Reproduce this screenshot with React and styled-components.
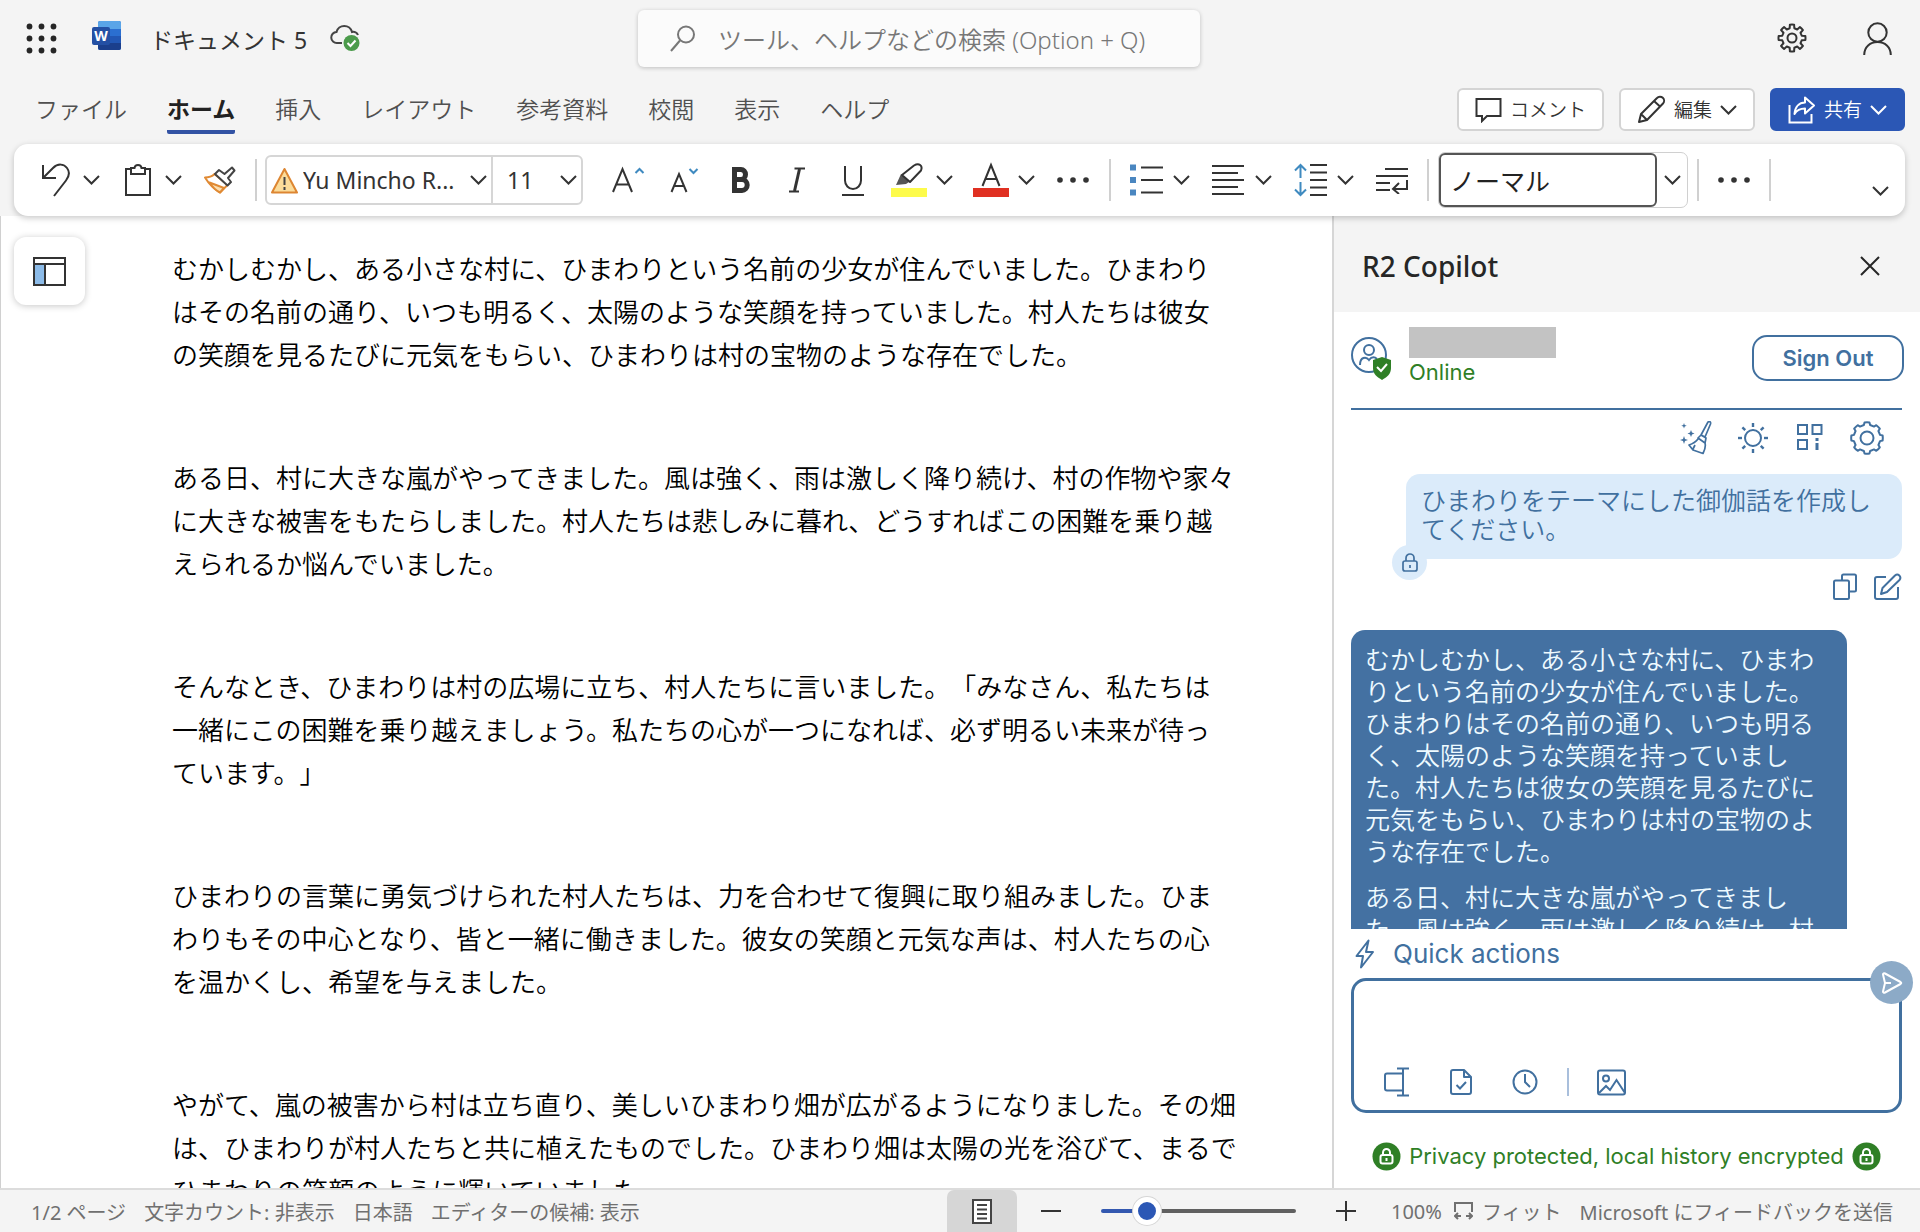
import React, { useState } from 'react';
import styled, { createGlobalStyle } from 'styled-components';

const uiFont = `"Noto Sans", "Noto Sans CJK JP", sans-serif`;
const panelFont = `Inter, "Noto Sans CJK JP", sans-serif`;

const blue = '#41709f';
const green = '#2f7f26';

const GlobalStyle = createGlobalStyle`
  * {
    box-sizing: border-box;
  }

  body {
    margin: 0;
    background: #f4f4f4;
    color: #333;
    font-family: ${uiFont};
    text-spacing-trim: space-all;
  }

  button, input, select, textarea {
    margin: 0;
    padding: 0;
    border: 0;
    background: none;
    color: inherit;
    font: inherit;
  }

  svg {
    display: block;
    flex: none;
  }

  p, h1 {
    margin: 0;
  }
`;

const Window = styled.div`
  display: flex;
  flex-direction: column;
  height: 100vh;
  overflow: hidden;
`;

/* ---------- header ---------- */

const TitleBar = styled.header`
  display: grid;
  grid-template-columns: 638fr 562fr 720fr;
  align-items: center;
  height: 76px;
`;

const TitleLeft = styled.div`
  display: flex;
  align-items: center;
  padding-left: 26px;
`;

const DocName = styled.h1`
  margin: 2px 23px 0 28px;
  font-size: 23px;
  font-weight: 400;
  white-space: nowrap;
`;

const Launcher = styled.button`
  margin-right: 35px;
`;

const SearchBox = styled.label`
  display: flex;
  align-items: center;
  gap: 22px;
  height: 57px;
  padding: 2px 32px 0;
  border-radius: 6px;
  background: #fbfbfb;
  box-shadow: 0 1px 4px rgba(0, 0, 0, 0.22);
  color: #777;
`;

const SearchInput = styled.input.attrs({ type: 'search' })`
  flex: 1;
  min-width: 0;
  outline: 0;
  appearance: none;
  font-size: 24px;
  font-weight: 350;

  &::placeholder {
    color: #777;
    opacity: 1;
  }
`;

const TitleRight = styled.div`
  display: flex;
  justify-content: flex-end;
  align-items: center;
  gap: 56px;
  padding-right: 28px;
`;

const TabBar = styled.div`
  display: flex;
  justify-content: space-between;
  height: 68px;
  padding: 12px 15px 0 35px;
`;

const Tabs = styled.nav`
  display: flex;
  gap: 40px;
  height: 46px;
`;

const Tab = styled.a`
  border-bottom: 4px solid ${p => (p.$active ? '#3353a4' : 'transparent')};
  border-radius: 2px;
  color: ${p => (p.$active ? '#222' : '#505050')};
  font-size: 23px;
  font-weight: ${p => (p.$active ? 700 : 350)};
  line-height: 42px;
  text-decoration: none;
  white-space: nowrap;
`;

const TabActions = styled.div`
  display: flex;
  gap: 15px;
`;

const ActionButton = styled.button`
  display: flex;
  align-items: center;
  gap: 8px;
  height: 43px;
  padding: 0 16px;
  border: 2px solid ${p => (p.$primary ? '#2b57b5' : '#d4d4d4')};
  border-radius: 6px;
  background: ${p => (p.$primary ? '#2b57b5' : '#fff')};
  color: ${p => (p.$primary ? '#fff' : '#333')};
  font-size: 19px;
  font-weight: 350;
  line-height: 30px;
  white-space: nowrap;
`;

/* ---------- ribbon ---------- */

const Ribbon = styled.div`
  position: relative;
  z-index: 1;
  display: flex;
  align-items: center;
  height: 72px;
  margin: 0 15px 0 14px;
  padding: 0 16px 0 7px;
  border-radius: 14px;
  background: #fff;
  box-shadow: 0 2px 6px rgba(0, 0, 0, 0.22);
`;

const Group = styled.div`
  display: flex;
  align-items: center;
  gap: 20px;
  padding: 0 17px;
`;

const FontGroup = styled(Group)`
  padding: 0 18px 0 8px;
`;

const StyleGroup = styled(Group)`
  padding: 0 9px;
`;

const Divider = styled.div`
  width: 2px;
  height: 42px;
  background: #d0d0d0;
`;

const ToolButton = styled.button`
  display: flex;
  justify-content: center;
  align-items: center;
  width: 36px;
  height: 42px;
`;

const SplitButton = styled.button`
  display: grid;
  grid-template-columns: 36px 17px;
  gap: 9px;
  align-items: center;
  justify-items: center;
  height: 42px;
`;

const CollapseButton = styled.button`
  align-self: flex-end;
  margin-left: auto;
  padding-bottom: 20px;
`;

const FontBox = styled.div`
  display: flex;
  width: 318px;
  height: 50px;
  margin-right: 8px;
  border: 2px solid #d6d6d6;
  border-radius: 6px;
`;

const FontField = styled.label`
  display: flex;
  flex: ${p => (p.$narrow ? '0 0 90px' : 1)};
  align-items: center;
  gap: 5px;
  padding: 0 4px 0 ${p => (p.$narrow ? 14 : 4)}px;
  border-left: ${p => (p.$narrow ? '2px solid #d6d6d6' : 0)};

  select {
    flex: 1;
    min-width: 0;
    appearance: none;
    outline: 0;
    font-size: 23px;
  }
`;

const StyleBox = styled.div`
  display: flex;
  width: 250px;
  height: 56px;
  border: 1px solid #d0d0d0;
  border-radius: 7px;

  input {
    flex: 1;
    min-width: 0;
    padding: 0 9px;
    border: 2px solid #555;
    border-radius: 6px;
    outline: 0;
    color: #222;
    font-size: 25px;
  }

  button {
    display: grid;
    place-items: center;
    width: 30px;
  }
`;

/* ---------- document ---------- */

const Workspace = styled.main`
  display: flex;
  flex: 1;
  min-height: 0;
`;

const DocumentArea = styled.section`
  display: flex;
  flex: 1;
  align-items: flex-start;
  min-width: 0;
  padding-left: 13px;
  overflow: hidden;
  border-left: 1px solid #d0d0d0;
  background: #fff;
`;

const NavButton = styled.button`
  display: grid;
  flex: none;
  place-items: center;
  width: 71px;
  height: 68px;
  margin-top: 21px;
  border-radius: 12px;
  background: #fff;
  box-shadow: 0 1px 7px rgba(0, 0, 0, 0.22);
`;

const Page = styled.article`
  flex: 1;
  padding: 32px 0 0 87px;
  color: #000;
  font-size: 26px;
  font-weight: 350;
  line-height: 43px;
  white-space: nowrap;

  p {
    margin-bottom: 80px;
  }
`;

/* ---------- copilot ---------- */

const Panel = styled.aside`
  display: flex;
  flex: 0 0 588px;
  flex-direction: column;
  border-left: 2px solid #d6d6d6;
  background: #fff;
  color: ${blue};
  font-family: ${panelFont};
`;

const PanelHeader = styled.div`
  display: flex;
  justify-content: space-between;
  align-items: center;
  height: 96px;
  padding: 3px 40px 0 28px;
  background: #f4f4f4;
  color: #262626;
  font-family: ${uiFont};
  font-size: 28px;
  font-weight: 500;
`;

const PanelBody = styled.div`
  display: flex;
  flex: 1;
  flex-direction: column;
  min-height: 0;
  padding: 0 18px 0 17px;
`;

const Account = styled.div`
  display: flex;
  align-items: center;
  height: 98px;
  padding-bottom: 4px;
  border-bottom: 2px solid ${blue};
`;

const AccountText = styled.div`
  flex: 1;
  margin-left: 16px;
  padding-bottom: 4px;
  color: ${green};
  font-size: 22px;
  line-height: 28px;
`;

const HiddenName = styled.div`
  width: 147px;
  height: 31px;
  background: #c3c3c3;
`;

const SignOut = styled.button`
  width: 152px;
  height: 46px;
  margin-right: -2px;
  border: 2px solid ${blue};
  border-radius: 15px;
  font-size: 22px;
  font-weight: 600;
`;

const PanelTools = styled.div`
  display: flex;
  flex: none;
  justify-content: flex-end;
  align-items: center;
  gap: 23px;
  height: 55px;
  padding-right: 18px;

  button {
    display: grid;
    place-items: center;
    width: 34px;
    height: 36px;
  }
`;

const Chat = styled.div`
  display: flex;
  flex: 1;
  flex-direction: column;
  min-height: 0;
  padding-top: 9px;
  overflow: hidden;
`;

const UserBubble = styled.div`
  position: relative;
  flex: none;
  align-self: flex-end;
  width: 90%;
  padding: 13px 15px 14px;
  border-radius: 14px;
  background: #dbebfa;
  font-size: 25px;
  font-weight: 350;
  line-height: 29px;
`;

const LockBadge = styled.span`
  position: absolute;
  bottom: -21px;
  left: -14px;
  display: grid;
  place-items: center;
  width: 35px;
  height: 35px;
  border-radius: 50%;
  background: #dbebfa;
`;

const BubbleActions = styled.div`
  display: flex;
  justify-content: flex-end;
  gap: 17px;
  margin: 14px 0 29px;
`;

const ReplyBubble = styled.div`
  flex: none;
  width: 90%;
  padding: 14px;
  border-radius: 14px;
  background: #4471a2;
  color: #eefaff;
  font-size: 25px;
  font-weight: 350;
  line-height: 32px;

  p + p {
    margin-top: 14px;
  }
`;

const QuickActions = styled.button`
  display: flex;
  align-items: center;
  gap: 18px;
  height: 49px;
  padding-left: 4px;
  font-size: 26px;
`;

const Composer = styled.div`
  position: relative;
  display: flex;
  flex: none;
  flex-direction: column;
  height: 135px;
  border: 3px solid ${blue};
  border-radius: 15px;

  textarea {
    flex: 1;
    padding: 12px 40px 0 16px;
    outline: 0;
    resize: none;
    font-size: 22px;
  }
`;

const SendButton = styled.button`
  position: absolute;
  top: -20px;
  right: -14px;
  display: grid;
  place-items: center;
  width: 43px;
  height: 43px;
  border-radius: 50%;
  background: #8caac7;
  color: #fff;
`;

const ComposerTools = styled.div`
  display: flex;
  align-items: center;
  gap: 27px;
  padding: 0 28px 13px;
`;

const ComposerGroup = styled.div`
  display: flex;
  gap: 34px;

  button {
    display: grid;
    place-items: center;
    width: 30px;
    height: 30px;
  }
`;

const ToolDivider = styled.div`
  width: 2px;
  height: 28px;
  background: #a9bfdc;
`;

const Privacy = styled.div`
  display: flex;
  flex: none;
  justify-content: center;
  align-items: center;
  gap: 8px;
  height: 75px;
  padding-top: 11px;
  color: ${green};
  font-size: 22px;
  white-space: nowrap;
`;

/* ---------- status bar ---------- */

const StatusBar = styled.footer`
  display: flex;
  justify-content: space-between;
  height: 44px;
  padding: 0 27px 0 31px;
  border-top: 2px solid #dcdcdc;
  color: #707070;
  font-size: 20px;
  white-space: nowrap;
`;

const StatusGroup = styled.div`
  display: flex;
  align-items: center;
  gap: ${p => p.$gap}px;
`;

const StatusButton = styled.button`
  display: flex;
  align-items: center;
  gap: 9px;
`;

const ViewButton = styled.button`
  display: grid;
  place-items: center;
  width: 70px;
  height: 42px;
  border-radius: 7px 7px 0 0;
  background: #d6d6d6;
  color: #444;
`;

const ZoomGroup = styled(StatusGroup)`
  margin: 0 17px 0 6px;
  color: #333;
`;

const ZoomSlider = styled.input.attrs({ type: 'range' })`
  width: 195px;
  height: 28px;
  appearance: none;

  &::-webkit-slider-runnable-track {
    height: 4px;
    border-radius: 2px;
    background: linear-gradient(to right, #3358b0 23%, #606060 23%);
  }

  &::-webkit-slider-thumb {
    width: 28px;
    height: 28px;
    margin-top: -12px;
    border: 5px solid #fff;
    border-radius: 50%;
    appearance: none;
    background: #2b57b5;
    box-shadow: 0 0 0 1px #d6d6d6;
  }
`;

/* ---------- icons ---------- */

const Icon = ({ w, h, sw = 2, children }) => (
  <svg
    width={w}
    height={h}
    viewBox={`0 0 ${w} ${h}`}
    fill="none"
    stroke="currentColor"
    strokeWidth={sw}
    aria-hidden="true"
  >
    {children}
  </svg>
);

// outline of a cog centred on (c, c)
function cog(c, outer, inner, teeth) {
  const step = (Math.PI * 2) / teeth;
  const at = (r, a) => `${(c + r * Math.sin(a)).toFixed(2)} ${(c - r * Math.cos(a)).toFixed(2)}`;
  let d = '';

  for (let i = 0; i < teeth; i++) {
    const a = i * step;
    d += `${i ? 'L' : 'M'}${at(inner, a - step * 0.3)} L${at(outer, a - step * 0.2)} `;
    d += `A${outer} ${outer} 0 0 1 ${at(outer, a + step * 0.2)} L${at(inner, a + step * 0.3)} `;
  }

  return d + 'Z';
}

const Chevron = () => (
  <Icon w={17} h={10}><path d="M1 1l7.500 7.500L16 1" /></Icon>
);

const WaffleIcon = () => (
  <Icon w={31} h={31}>
    {[4, 16, 28].map(y => [4, 16, 28].map(x => (
      <circle key={x + '-' + y} cx={x - 0.5} cy={y - 0.5} r="2.900" fill="#262626" stroke="none" />
    )))}
  </Icon>
);

const WordIcon = () => (
  <svg width="30" height="35" viewBox="0 0 30 35" aria-hidden="true">
    <rect x="6" y="0" width="23" height="29" rx="2" fill="#2b6fd0" />
    <path d="M8 0h19a2 2 0 0 1 2 2v6H6V2a2 2 0 0 1 2-2z" fill="#5aa5e8" />
    <path d="M6 15h23v7H6z" fill="#2257b4" />
    <path d="M6 22h23v5a2 2 0 0 1-2 2H8a2 2 0 0 1-2-2z" fill="#1b3f8c" />
    <rect x="0" y="6" width="18" height="18" rx="2" fill="#2450a4" />
    <text x="9" y="20" fill="#fff" fontSize="14" fontWeight="700" textAnchor="middle" fontFamily="Noto Sans">W</text>
  </svg>
);

const CloudIcon = () => (
  <Icon w={31} h={29}>
    <path d="M12 18H7a5.500 5.500 0 0 1-.5-11A8 8 0 0 1 22 7a5 5 0 0 1 6 3" stroke="#444" transform="translate(0 1)" />
    <circle cx="21.500" cy="19" r="8" fill="#4b9b4b" stroke="none" />
    <path d="M17.500 19l3 3 5-5.500" stroke="#fff" />
  </Icon>
);

const SearchIcon = () => (
  <Icon w={26} h={28}>
    <circle cx="16" cy="9.500" r="8" />
    <path d="M10 15.500L1 26" />
  </Icon>
);

const SettingsIcon = () => (
  <Icon w={30} h={30}>
    <path d={cog(15, 13.5, 10, 8)} strokeLinejoin="round" />
    <circle cx="15" cy="15" r="4.500" />
  </Icon>
);

const PersonIcon = () => (
  <Icon w={29} h={33}>
    <circle cx="14.500" cy="10.500" r="9.200" />
    <path d="M1.200 33c0-8 6-13 13.300-13s13.300 5 13.300 13" />
  </Icon>
);

const CommentIcon = () => (
  <Icon w={27} h={26}><path d="M1.500 2h24v17H12l-5 5v-5H1.500z" /></Icon>
);

const PencilIcon = () => (
  <Icon w={29} h={29}>
    <path d="M2 27l2-8L20 3a3.800 3.800 0 0 1 6 5.500L10 25zM17 6l6 5.500M4 19l6 6" strokeLinejoin="round" />
  </Icon>
);

const ShareIcon = () => (
  <Icon w={28} h={28}>
    <path d="M1.500 9v17.500h22V18" />
    <path d="M17 1.500l9 8-9 8v-5c-5 0-8.500 2-10.500 5.500C7 11 11 6.500 17 6.500z" strokeLinejoin="round" />
  </Icon>
);

const UndoIcon = () => (
  <Icon w={30} h={34}><path d="M2 2v13h13M2 15L12 5c5-5 11-4 14 0s2.500 8-1 12.500L13 33" /></Icon>
);

const ClipboardIcon = () => (
  <Icon w={26} h={33}>
    <path d="M6 5H1v26h24V5h-5" />
    <path d="M6 4h3.500C10 0 16 0 16.500 4H20v6H6z" />
  </Icon>
);

const BrushIcon = () => (
  <Icon w={32} h={28}>
    <path d="M1 11.500c4 0 7-1 9.500-3.500l13 11L16 26.500C10 23 5 18 1 11.500z" fill="#fff" stroke="#e08a34" strokeLinejoin="round" />
    <path d="M5.500 16.500L20 22l-4 4.500c-4-2-8-6-10.500-10z" fill="#fbdfb0" stroke="#e08a34" strokeLinejoin="round" />
    <path d="M11 8l4-4 5.500 4 7.500-6.500 2.500 3L24 12l3 4-3.500 3.500z" fill="#fff" stroke="#444" strokeLinejoin="round" />
  </Icon>
);

const WarningIcon = () => (
  <Icon w={27} h={27}>
    <path d="M13.500 2L26 25.500H1z" fill="#fbdc9a" stroke="#dd8632" strokeLinejoin="round" />
    <path d="M13.500 10v8M13.500 20v3" stroke="#444" />
  </Icon>
);

const GrowIcon = () => (
  <Icon w={34} h={28}>
    <path d="M1 26L10.500 3 20 26M4.500 18.500h12" />
    <path d="M23.500 7l4-4 4 4" stroke="#3f8ac0" />
  </Icon>
);

const ShrinkIcon = () => (
  <Icon w={34} h={28}>
    <path d="M3.500 26L11 8l7.500 18M6.500 20h9" />
    <path d="M21.500 3l4 4 4-4" stroke="#3f8ac0" />
  </Icon>
);

const BoldIcon = () => (
  <Icon w={20} h={26} sw={5}>
    <path d="M3.500 2.500H10a4.500 5 0 0 1 0 10H3.500zM3.500 12.500h7.500a5.200 5.500 0 0 1 0 11H3.500z" />
  </Icon>
);

const ItalicIcon = () => (
  <Icon w={16} h={26}><path d="M5.500 1.500H16M0 24.500h10" /><path d="M10.500 2L5.500 24" strokeWidth="3" /></Icon>
);

const UnderlineIcon = () => (
  <Icon w={22} h={31}><path d="M3 1v14.500a8 8.500 0 0 0 16 0V1M0 30h22" /></Icon>
);

const HighlightIcon = () => (
  <Icon w={36} h={36}>
    <path d="M0 26h36v9H0z" fill="#fdfb4b" stroke="none" />
    <path d="M5 23l5-11 8 8-3 2z" fill="#555" stroke="none" />
    <path d="M11 13L23 3.500c5-3 9 0 7 5L19 20z" fill="#fff" strokeLinejoin="round" />
  </Icon>
);

const FontColorIcon = () => (
  <Icon w={36} h={36}>
    <path d="M0 26h36v9H0z" fill="#e03022" stroke="none" />
    <path d="M9.500 24L18 3l8.500 21M12.500 17h11" />
  </Icon>
);

const DotsIcon = () => (
  <Icon w={32} h={6}>
    {[3, 16, 29].map(x => <circle key={x} cx={x} cy="3" r="2.800" fill="currentColor" stroke="none" />)}
  </Icon>
);

const BulletsIcon = () => (
  <Icon w={33} h={32}>
    {[1, 13.5, 26].map(y => (
      <g key={y}>
        <path d={`M0 ${y - 0.5}h6v6H0z`} fill="#4a86c0" stroke="none" />
        <path d={`M11 ${y + 2.5}h22`} />
      </g>
    ))}
  </Icon>
);

const AlignIcon = () => (
  <Icon w={32} h={32}><path d="M0 2h32M0 9h26M0 16h32M0 23h26M0 30h32" /></Icon>
);

const SpacingIcon = () => (
  <Icon w={33} h={34}>
    <path d="M16 2h17M16 9.500h17M16 17h17M16 24.500h17M16 32h17" />
    <path d="M6.500 2v13M1 7.500L6.500 2 12 7.500M6.500 19v13M1 26.500L6.500 32l5.500-5.500" stroke="#3f8ac0" />
  </Icon>
);

const WrapIcon = () => (
  <Icon w={32} h={27}><path d="M9 2h23M0 9h32M0 16h14M0 23h14M31 13v9H18M23 16l-6 6 6 5" /></Icon>
);

const NavPaneIcon = () => (
  <Icon w={33} h={29}>
    <path d="M1 7h11v21H1z" fill="#8cbbe8" stroke="none" />
    <path d="M1 1h31v27H1zM1 7h31M12 7v21" />
  </Icon>
);

const CloseIcon = () => (
  <Icon w={20} h={20}><path d="M1 1l18 18M19 1L1 19" /></Icon>
);

const AvatarIcon = () => (
  <Icon w={42} h={44}>
    <circle cx="18" cy="19" r="17" />
    <circle cx="18" cy="14" r="5" />
    <path d="M9 29c0-8 6-9 9-5 3-4 6-3 8-1" />
    <path d="M31 21l9 3v8c0 6-4 9-9 12-5-3-9-6-9-12v-8z" fill={green} stroke="none" />
    <path d="M26 31l4 4 6-7" stroke="#fff" />
  </Icon>
);

const BroomIcon = () => (
  <Icon w={32} h={34}>
    <path d="M28 1c2-1 3 0 2.500 2L25 16l-4-2zM21 14l-3 3 7 5 1-5zM18 18c-3 4-6 5-9 6l4 5 10 3.500c2-4 3-7 2-10.500M15 24l-2 4" strokeLinejoin="round" strokeWidth="1.700" />
    <path d="M4 15l1 3 3 1-3 1-1 3-1-3-3-1 3-1zM11 9l1 2.500 2.500 1-2.500 1L11 16l-1-2.500-2.500-1 2.500-1zM4 2l.7 2 2 .7-2 .7L4 7.500l-.7-2-2-.7 2-.7z" fill="currentColor" stroke="none" />
  </Icon>
);

const SunIcon = () => (
  <Icon w={32} h={32}>
    <circle cx="16" cy="16" r="8" />
    {[0, 45, 90, 135, 180, 225, 270, 315].map(a => (
      <path key={a} d="M16 1v4" strokeWidth="2.400" transform={`rotate(${a} 16 16)`} />
    ))}
  </Icon>
);

const AppsIcon = () => (
  <Icon w={26} h={27}>
    <path d="M1 1h9v9H1zM15.500 1h9v9h-9zM1 16h9v9H1z" />
    <path d="M20 14v3M20 19v7" strokeWidth="3" />
  </Icon>
);

const PanelCogIcon = () => (
  <Icon w={34} h={34}>
    <path d={cog(17, 15.8, 13.4, 8)} strokeLinejoin="round" />
    <circle cx="17" cy="17" r="6.500" />
  </Icon>
);

const LockIcon = () => (
  <Icon w={16} h={19} sw={1.7}>
    <rect x="1" y="8" width="14" height="10" rx="2" />
    <path d="M4 8V5a4 4 0 0 1 8 0v3M8 12v3" />
  </Icon>
);

const CopyIcon = () => (
  <Icon w={24} h={28}>
    <path d="M9 7V3a1.500 1.500 0 0 1 1.500-1.500h11A1.500 1.500 0 0 1 23 3v14a1.500 1.500 0 0 1-1.500 1.500H16" />
    <rect x="1" y="7.500" width="15" height="18.500" rx="1.500" />
  </Icon>
);

const EditIcon = () => (
  <Icon w={28} h={28}>
    <path d="M12 4H3a2 2 0 0 0-2 2v18a2 2 0 0 0 2 2h19a2 2 0 0 0 2-2V14" />
    <path d="M7 21l1.500-6L21 2.500c3-2.500 7 1 4.500 4.500L13 19z" strokeLinejoin="round" />
  </Icon>
);

const BoltIcon = () => (
  <Icon w={20} h={30}><path d="M13.500 1.500L1.500 17h6.500l-2 11.500L18 13h-7z" strokeLinejoin="round" /></Icon>
);

const SendIcon = () => (
  <Icon w={22} h={22}><path d="M2 2.500c0-1 1-1.500 2-1L19.500 10c1 .6 1 1.400 0 2L4 20.500c-1 .5-2 0-2-1L4 11zM4 11h6" strokeLinejoin="round" /></Icon>
);

const RenameIcon = () => (
  <Icon w={26} h={30}><path d="M19 6.500H3a2 2 0 0 0-2 2v13a2 2 0 0 0 2 2h16M13 1.500h12M13 28.500h12M19 1.500v27" /></Icon>
);

const FileCheckIcon = () => (
  <Icon w={22} h={26}>
    <path d="M14 1H3a2 2 0 0 0-2 2v20a2 2 0 0 0 2 2h16a2 2 0 0 0 2-2V8zM14 1v7h7" strokeLinejoin="round" />
    <path d="M6.500 16l3.500 3.500 6-6.500" />
  </Icon>
);

const ClockIcon = () => (
  <Icon w={26} h={26}><circle cx="13" cy="13" r="11.500" /><path d="M13 5v8l5 5" /></Icon>
);

const ImageIcon = () => (
  <Icon w={29} h={27}>
    <rect x="1" y="1.500" width="27" height="24" rx="2" />
    <circle cx="9" cy="9.500" r="3" />
    <path d="M2 24l7-7 4 4 6.500-10L28 24" />
  </Icon>
);

const SafeIcon = () => (
  <Icon w={29} h={29}>
    <circle cx="14.500" cy="14.500" r="14" fill={green} stroke="none" />
    <rect x="8.500" y="13" width="12" height="8.500" rx="2" stroke="#fff" />
    <path d="M11 13v-2.500a3.500 3.500 0 0 1 7 0V13M14.500 16v3" stroke="#fff" />
  </Icon>
);

const PageIcon = () => (
  <Icon w={20} h={25}><path d="M1 1h18v23H1z" fill="#fff" /><path d="M5 6h10M5 10.500h10M5 15h10M5 19.500h10" /></Icon>
);

const FitIcon = () => (
  <Icon w={19} h={18}><path d="M1 10V1h17v9M1 14h6M4 11l-3 3 3 3M12 14h6M15 11l3 3-3 3" /></Icon>
);

const MinusIcon = () => <Icon w={20} h={20}><path d="M0 10h20" /></Icon>;
const PlusIcon = () => <Icon w={20} h={20}><path d="M0 10h20M10 0v20" /></Icon>;

/* ---------- content ---------- */

const tabs = ['ファイル', 'ホーム', '挿入', 'レイアウト', '参考資料', '校閲', '表示', 'ヘルプ'];

const story = [
  [
    'むかしむかし、ある小さな村に、ひまわりという名前の少女が住んでいました。ひまわり',
    'はその名前の通り、いつも明るく、太陽のような笑顔を持っていました。村人たちは彼女',
    'の笑顔を見るたびに元気をもらい、ひまわりは村の宝物のような存在でした。',
  ],
  [
    'ある日、村に大きな嵐がやってきました。風は強く、雨は激しく降り続け、村の作物や家々',
    'に大きな被害をもたらしました。村人たちは悲しみに暮れ、どうすればこの困難を乗り越',
    'えられるか悩んでいました。',
  ],
  [
    'そんなとき、ひまわりは村の広場に立ち、村人たちに言いました。「みなさん、私たちは',
    '一緒にこの困難を乗り越えましょう。私たちの心が一つになれば、必ず明るい未来が待っ',
    'ています。」',
  ],
  [
    'ひまわりの言葉に勇気づけられた村人たちは、力を合わせて復興に取り組みました。ひま',
    'わりもその中心となり、皆と一緒に働きました。彼女の笑顔と元気な声は、村人たちの心',
    'を温かくし、希望を与えました。',
  ],
  [
    'やがて、嵐の被害から村は立ち直り、美しいひまわり畑が広がるようになりました。その畑',
    'は、ひまわりが村人たちと共に植えたものでした。ひまわり畑は太陽の光を浴びて、まるで',
    'ひまわりの笑顔のように輝いていました。',
  ],
];

const Header = () => (
  <>
    <TitleBar>
      <TitleLeft>
        <Launcher aria-label="アプリ起動ツール"><WaffleIcon /></Launcher>
        <WordIcon />
        <DocName>ドキュメント 5</DocName>
        <CloudIcon />
      </TitleLeft>
      <SearchBox>
        <SearchIcon />
        <SearchInput placeholder="ツール、ヘルプなどの検索 (Option + Q)" />
      </SearchBox>
      <TitleRight>
        <button aria-label="設定"><SettingsIcon /></button>
        <button aria-label="アカウント"><PersonIcon /></button>
      </TitleRight>
    </TitleBar>
    <TabBar>
      <Tabs>
        {tabs.map(name => (
          <Tab key={name} href="#" $active={name === 'ホーム'}>{name}</Tab>
        ))}
      </Tabs>
      <TabActions>
        <ActionButton><CommentIcon />コメント</ActionButton>
        <ActionButton><PencilIcon />編集<Chevron /></ActionButton>
        <ActionButton $primary><ShareIcon />共有<Chevron /></ActionButton>
      </TabActions>
    </TabBar>
  </>
);

const Toolbar = () => (
  <Ribbon>
    <Group>
      <SplitButton aria-label="元に戻す"><UndoIcon /><Chevron /></SplitButton>
      <SplitButton aria-label="貼り付け"><ClipboardIcon /><Chevron /></SplitButton>
      <ToolButton aria-label="書式のコピー"><BrushIcon /></ToolButton>
    </Group>
    <Divider />
    <FontGroup>
      <FontBox>
        <FontField>
          <WarningIcon />
          <select aria-label="フォント"><option>Yu Mincho R...</option></select>
          <Chevron />
        </FontField>
        <FontField $narrow>
          <select aria-label="フォント サイズ"><option>11</option></select>
          <Chevron />
        </FontField>
      </FontBox>
      <ToolButton aria-label="フォントの拡大"><GrowIcon /></ToolButton>
      <ToolButton aria-label="フォントの縮小"><ShrinkIcon /></ToolButton>
      <ToolButton aria-label="太字"><BoldIcon /></ToolButton>
      <ToolButton aria-label="斜体"><ItalicIcon /></ToolButton>
      <ToolButton aria-label="下線"><UnderlineIcon /></ToolButton>
      <SplitButton aria-label="蛍光ペンの色"><HighlightIcon /><Chevron /></SplitButton>
      <SplitButton aria-label="フォントの色"><FontColorIcon /><Chevron /></SplitButton>
      <ToolButton aria-label="その他のフォント"><DotsIcon /></ToolButton>
    </FontGroup>
    <Divider />
    <Group>
      <SplitButton aria-label="箇条書き"><BulletsIcon /><Chevron /></SplitButton>
      <SplitButton aria-label="配置"><AlignIcon /><Chevron /></SplitButton>
      <SplitButton aria-label="行間"><SpacingIcon /><Chevron /></SplitButton>
      <ToolButton aria-label="改行"><WrapIcon /></ToolButton>
    </Group>
    <Divider />
    <StyleGroup>
      <StyleBox>
        <input aria-label="スタイル" defaultValue="ノーマル" />
        <button aria-label="スタイルの一覧"><Chevron /></button>
      </StyleBox>
    </StyleGroup>
    <Divider />
    <Group>
      <ToolButton aria-label="その他のオプション"><DotsIcon /></ToolButton>
    </Group>
    <Divider />
    <CollapseButton aria-label="リボンの表示"><Chevron /></CollapseButton>
  </Ribbon>
);

const Copilot = () => {
  const [draft, setDraft] = useState('');

  return (
    <Panel>
      <PanelHeader>
        R2 Copilot
        <button aria-label="閉じる"><CloseIcon /></button>
      </PanelHeader>
      <PanelBody>
        <Account>
          <AvatarIcon />
          <AccountText>
            <HiddenName />
            Online
          </AccountText>
          <SignOut>Sign Out</SignOut>
        </Account>
        <PanelTools>
          <button aria-label="Clear"><BroomIcon /></button>
          <button aria-label="Theme"><SunIcon /></button>
          <button aria-label="Apps"><AppsIcon /></button>
          <button aria-label="Settings"><PanelCogIcon /></button>
        </PanelTools>
        <Chat>
          <UserBubble>
            ひまわりをテーマにした御伽話を作成してください。
            <LockBadge><LockIcon /></LockBadge>
          </UserBubble>
          <BubbleActions>
            <button aria-label="Copy"><CopyIcon /></button>
            <button aria-label="Edit"><EditIcon /></button>
          </BubbleActions>
          <ReplyBubble>
            {story.slice(0, 2).map(lines => <p key={lines[0]}>{lines.join('')}</p>)}
          </ReplyBubble>
        </Chat>
        <QuickActions><BoltIcon />Quick actions</QuickActions>
        <Composer>
          <textarea aria-label="Message" value={draft} onChange={e => setDraft(e.target.value)} />
          <ComposerTools>
            <ComposerGroup>
              <button aria-label="Insert text"><RenameIcon /></button>
              <button aria-label="Document"><FileCheckIcon /></button>
              <button aria-label="History"><ClockIcon /></button>
            </ComposerGroup>
            <ToolDivider />
            <ComposerGroup>
              <button aria-label="Image"><ImageIcon /></button>
            </ComposerGroup>
          </ComposerTools>
          <SendButton aria-label="Send"><SendIcon /></SendButton>
        </Composer>
        <Privacy>
          <SafeIcon />
          Privacy protected, local history encrypted
          <SafeIcon />
        </Privacy>
      </PanelBody>
    </Panel>
  );
};

const Status = () => (
  <StatusBar>
    <StatusGroup $gap={18}>
      <span>1/2 ページ</span>
      <span>文字カウント: 非表示</span>
      <span>日本語</span>
      <span>エディターの候補: 表示</span>
    </StatusGroup>
    <StatusGroup $gap={18}>
      <ViewButton aria-label="ページ表示"><PageIcon /></ViewButton>
      <ZoomGroup $gap={40}>
        <button aria-label="縮小"><MinusIcon /></button>
        <ZoomSlider aria-label="ズーム" min="0" max="100" defaultValue="19" />
        <button aria-label="拡大"><PlusIcon /></button>
      </ZoomGroup>
      <StatusGroup $gap={12}>
        <span>100%</span>
        <StatusButton><FitIcon />フィット</StatusButton>
      </StatusGroup>
      <StatusButton>Microsoft にフィードバックを送信</StatusButton>
    </StatusGroup>
  </StatusBar>
);

const App = () => (
  <Window>
    <GlobalStyle />
    <Header />
    <Toolbar />
    <Workspace>
      <DocumentArea>
        <NavButton aria-label="ナビゲーション"><NavPaneIcon /></NavButton>
        <Page lang="ja">
          {story.map(lines => (
            <p key={lines[0]}>
              {lines.map((line, i) => (
                <React.Fragment key={line}>
                  {i > 0 && <br />}
                  {line}
                </React.Fragment>
              ))}
            </p>
          ))}
        </Page>
      </DocumentArea>
      <Copilot />
    </Workspace>
    <Status />
  </Window>
);

export default App;
